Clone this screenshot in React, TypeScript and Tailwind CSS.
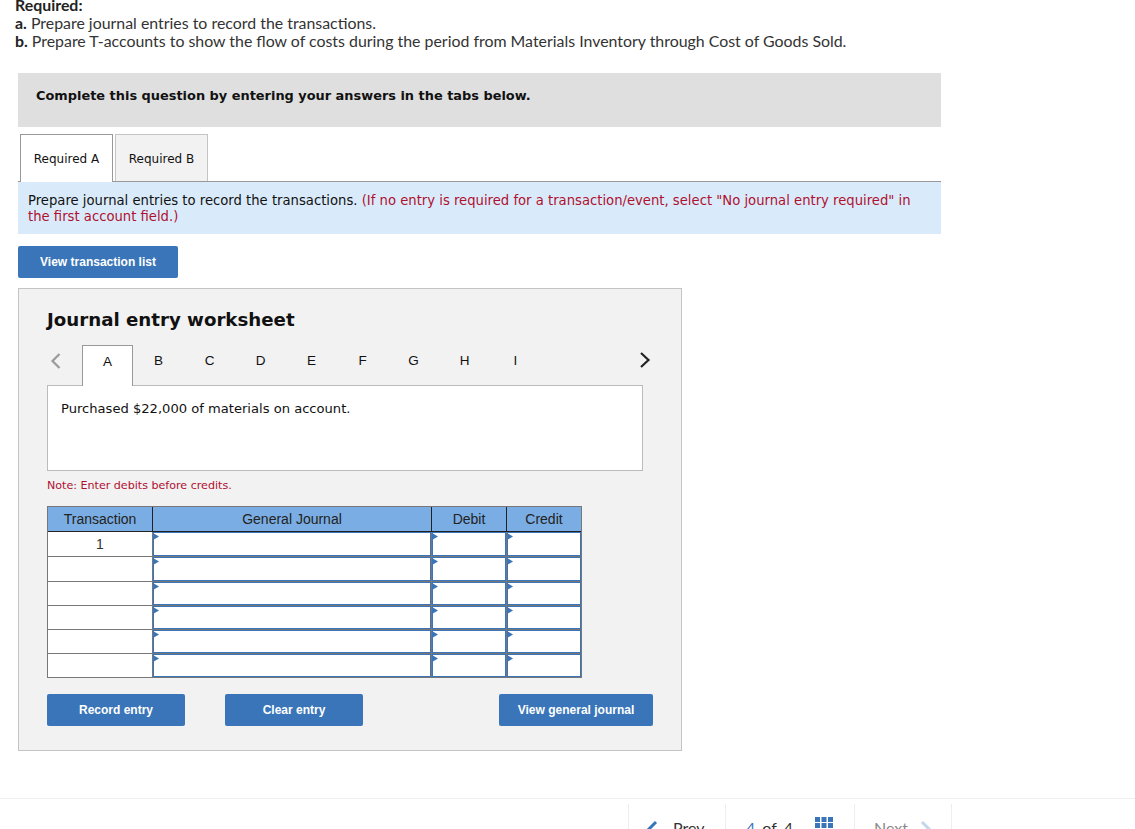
import React from "react";

const BTN = "flex items-center justify-center h-8 rounded-[2px] bg-[#3a75b9] text-white text-[12px] font-bold font-['Liberation_Sans',Arial,sans-serif]";

function Arrow() {
  return (
    <svg className="absolute -left-px -top-px" width="6" height="9" viewBox="0 0 6 9">
      <polygon points="0,1 6,4.5 0,8" fill="#3a75b9" />
    </svg>
  );
}

function InputCell({ right = true, last = false }: { right?: boolean; last?: boolean }) {
  return (
    <div className={`relative h-full bg-white ${right ? "border-r border-[#777777]" : ""} ${last ? "" : "border-b border-[#777777]"}`}>
      <div className="relative h-full border border-[#3a75b9] bg-white">
        <Arrow />
      </div>
    </div>
  );
}

function Row({ h, value, last = false }: { h: string; value?: string; last?: boolean }) {
  return (
    <div className={`grid grid-cols-[105px_279px_75px_74px] ${h}`}>
      <div className={`flex items-center justify-center bg-white border-r border-[#777777] text-[14px] text-[#333333] ${last ? "" : "border-b border-[#777777]"}`}>
        {value}
      </div>
      <InputCell last={last} />
      <InputCell last={last} />
      <InputCell right={false} last={last} />
    </div>
  );
}

function HeadCell({ children, right = true }: { children: string; right?: boolean }) {
  return (
    <div className={`flex items-center justify-center bg-[#7aade3] border-b border-[#222222] text-[14px] text-[#222222] ${right ? "border-r" : ""}`}>
      {children}
    </div>
  );
}

export default function App() {
  const letters = ["B", "C", "D", "E", "F", "G", "H", "I"];
  return (
    <div className="relative w-[1135px] h-[829px] overflow-hidden bg-white font-['DejaVu_Sans',Verdana,sans-serif] text-[13.2px] text-[#111111]">
      <div className="-mt-[4px] ml-[15px] font-['Lato','Open_Sans',sans-serif] text-[15.9px] leading-[18px] text-[#333333]">
        <p className="font-bold text-[#222222]">Required:</p>
        <p><b className="text-[#222222]">a.</b> Prepare journal entries to record the transactions.</p>
        <p><b className="text-[#222222]">b.</b> Prepare T-accounts to show the flow of costs during the period from Materials Inventory through Cost of Goods Sold.</p>
      </div>

      <div className="ml-[18px] mt-[23px] w-[923px]">
        <div className="h-[54px] bg-[#dfdfdf] pl-[18px] pt-[15px] font-bold text-[12.92px] leading-[16px] text-[#111111]">
          Complete this question by entering your answers in the tabs below.
        </div>

        <div className="mt-[7px] flex h-[48px] gap-[2px] pl-[2px] border-b border-[#999999]">
          <div className="flex items-center justify-center w-[93px] h-[48px] bg-white border border-b-0 border-[#999999] text-[12px]">Required A</div>
          <div className="flex items-center justify-center w-[93px] h-[47px] bg-[#f2f2f2] border border-b-0 border-[#c4c4c4] text-[12px] pt-[2px]">Required B</div>
        </div>

        <div className="h-[52px] bg-[#d9ebfa] pl-[10px] pr-[24px] pt-[11px] leading-[16px]">
          Prepare journal entries to record the transactions. <span className="text-[#b01030]">(If no entry is required for a transaction/event, select "No journal entry required" in the first account field.)</span>
        </div>

        <div className={`${BTN} mt-[12px] w-[160px]`}>View transaction list</div>
      </div>

      <div className="ml-[18px] mt-[10px] w-[664px] h-[463px] bg-[#f2f2f2] border border-[#c4c4c4] pl-[28px]">
        <h2 className="mt-[19px] font-bold text-[18.2px] leading-[24px] text-[#111111]">Journal entry worksheet</h2>

        <div className="relative z-10 mt-[13px] flex h-[41px] font-['Liberation_Sans',Arial,sans-serif] text-[13.5px]">
          <div className="flex w-[35px] items-center pl-[3px] pb-[9px]">
            <svg width="11" height="18" viewBox="0 0 11 18" fill="none" stroke="#9a9a9a" strokeWidth="2.2">
              <path d="M9.5 2 L2.5 9 L9.5 16" />
            </svg>
          </div>
          <div className="flex w-[51px] h-[41px] items-center justify-center bg-white border border-b-0 border-[#999999] pb-[8px]">A</div>
          {letters.map((l) => (
            <div key={l} className="flex w-[51px] items-center justify-center pb-[8px]">{l}</div>
          ))}
          <div className="flex flex-1 items-center pl-[98px] pb-[11px]">
            <svg width="12" height="18" viewBox="0 0 12 18" fill="none" stroke="#222222" strokeWidth="2.2">
              <path d="M2 2 L9.5 9 L2 16" />
            </svg>
          </div>
        </div>

        <div className="-mt-px w-[596px] h-[86px] bg-white border border-[#bbbbbb] pl-[13px] pt-[15px] text-[13.1px] leading-[16px]">
          Purchased $22,000 of materials on account.
        </div>

        <p className="mt-[6px] text-[11.1px] leading-[16px] pt-px text-[#b01030]">Note: Enter debits before credits.</p>

        <div className="mt-[12px] w-[535px] border border-[#777777] font-['Liberation_Sans',Arial,sans-serif]">
          <div className="grid grid-cols-[105px_279px_75px_74px] h-[25px]">
            <HeadCell>Transaction</HeadCell>
            <HeadCell>General Journal</HeadCell>
            <HeadCell>Debit</HeadCell>
            <HeadCell right={false}>Credit</HeadCell>
          </div>
          <Row h="h-[25px]" value="1" />
          <Row h="h-[25px]" />
          <Row h="h-[24px]" />
          <Row h="h-[24px]" />
          <Row h="h-[24px]" />
          <Row h="h-[23px]" last />
        </div>

        <div className="mt-[16px] flex">
          <div className={`${BTN} w-[138px]`}>Record entry</div>
          <div className={`${BTN} ml-[40px] w-[138px]`}>Clear entry</div>
          <div className={`${BTN} ml-[136px] w-[154px]`}>View general journal</div>
        </div>
      </div>

      <div className="mt-[47px] border-t border-[#eeeeee] pl-[628px] pt-[5px] font-['Lato',sans-serif] text-[16px]">
        <div className="flex h-[60px]">
          <div className="flex w-[97px] h-full border-l border-[#eeeeee] pl-[16px] pt-[14px]">
            <svg className="mt-[2px]" width="14" height="20" viewBox="0 0 14 20" fill="none" stroke="#3a75b9" strokeWidth="3">
              <path d="M11 2 L3 10 L11 18" />
            </svg>
            <span className="ml-[14px] leading-[19px] text-[#333333]">Prev</span>
          </div>
          <div className="flex w-[129px] h-full border-l border-[#eeeeee] pl-[20px] pt-[14px] leading-[19px] text-[#333333]">
            <span className="text-[#3a75b9]">4</span>
            <span className="ml-[7px]">of</span>
            <span className="ml-[7px]">4</span>
            <svg className="ml-[22px] -mt-[1px]" width="18" height="16" viewBox="0 0 18 16" fill="#3a75b9">
              <rect x="0" y="0" width="5" height="5" />
              <rect x="6.5" y="0" width="5" height="5" />
              <rect x="13" y="0" width="5" height="5" />
              <rect x="0" y="6" width="5" height="5" />
              <rect x="6.5" y="6" width="5" height="5" />
              <rect x="13" y="6" width="5" height="5" />
            </svg>
          </div>
          <div className="flex w-[98px] h-full border-x border-[#eeeeee] pl-[19px] pt-[14px] leading-[19px] text-[#8a8a8a]">
            <span>Next</span>
            <svg className="ml-[11px] mt-[2px]" width="14" height="20" viewBox="0 0 14 20" fill="none" stroke="#c3d6ec" strokeWidth="3">
              <path d="M3 2 L11 10 L3 18" />
            </svg>
          </div>
        </div>
      </div>
    </div>
  );
}
